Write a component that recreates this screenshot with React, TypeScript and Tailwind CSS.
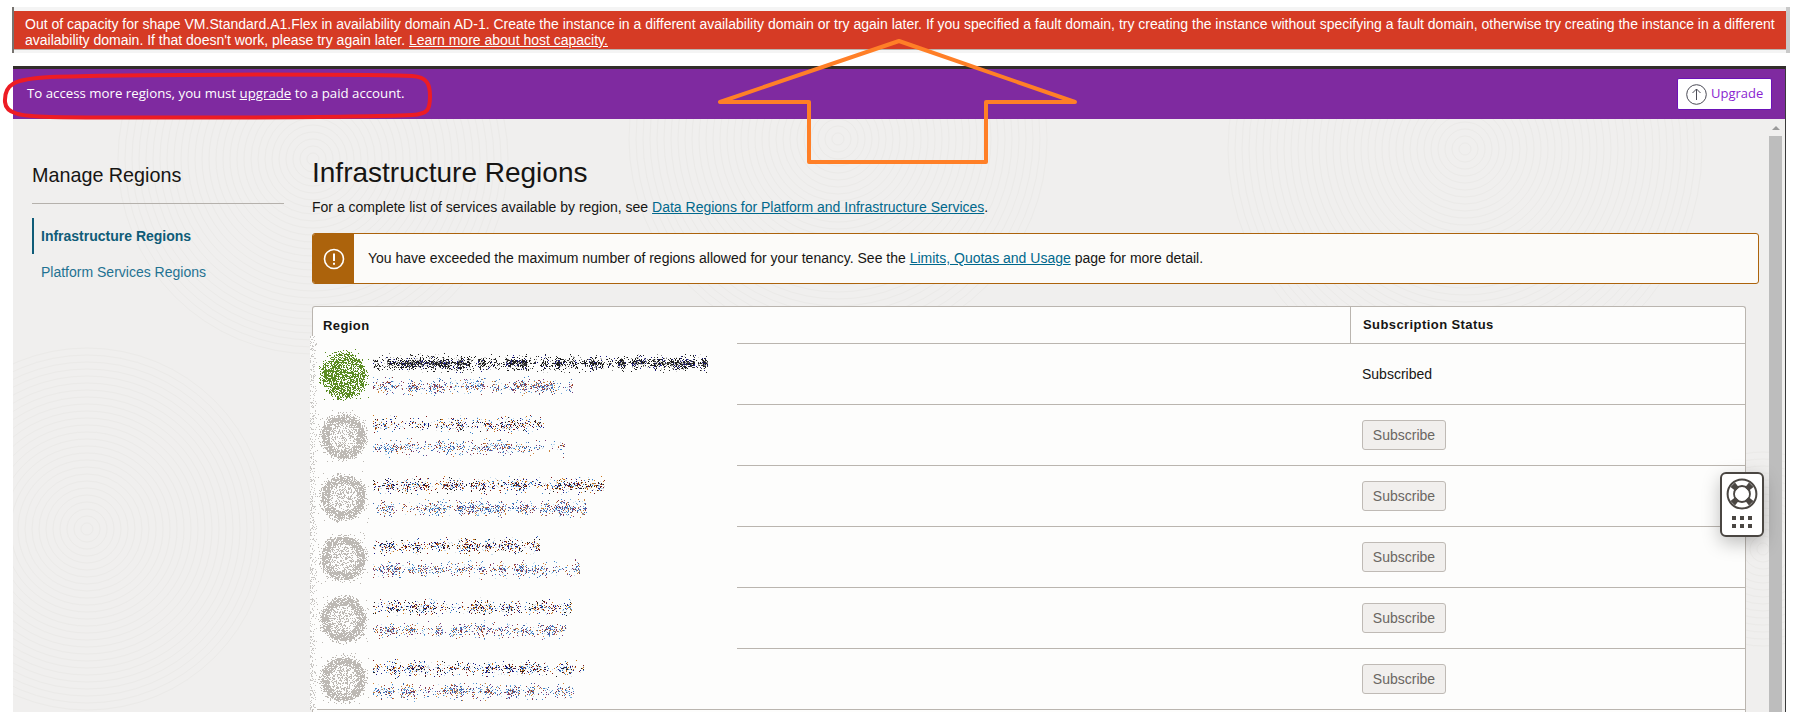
type Dot = { x: number; y: number; c: string };

function rng(seed: number) {
  let s = seed;
  return () => {
    s = (s * 1664525 + 1013904223) % 4294967296;
    return s / 4294967296;
  };
}

function Dots({ dots, width, height, className }: { dots: Dot[]; width: number; height: number; className?: string }) {
  const byColor: Record<string, string> = {};
  dots.forEach((d) => {
    byColor[d.c] = (byColor[d.c] || "") + `M${d.x} ${d.y}h1v1h-1z`;
  });
  return (
    <svg width={width} height={height} className={className} shapeRendering="crispEdges">
      {Object.keys(byColor).map((c) => (
        <path key={c} d={byColor[c]} fill={c} />
      ))}
    </svg>
  );
}

// pixel scatter used for the blurred-out region names
function Scramble({ width, seed, colors, density = 0.5 }: { width: number; seed: number; colors: string[]; density?: number }) {
  const r = rng(seed);
  const dots: Dot[] = [];
  const height = 22;
  let clump = 1;
  for (let x = 0; x < width; x++) {
    if (x % 7 === 0) clump = 0.2 + r() * 1.1;
    for (let y = 0; y < height; y++) {
      const dy = Math.abs(y - height / 2) / (height / 2);
      const p = density * clump * Math.pow(1 - dy, 2);
      if (r() < p) dots.push({ x, y, c: colors[Math.floor(r() * colors.length)] });
    }
  }
  return <Dots dots={dots} width={width} height={height} />;
}

function Globe({ seed, green }: { seed: number; green: boolean }) {
  const r = rng(seed);
  const dots: Dot[] = [];
  const size = 52;
  const c = green ? "#5b8c22" : "#bdb9b4";
  for (let x = 0; x < size; x++) {
    for (let y = 0; y < size; y++) {
      const d = Math.hypot(x - 26, y - 26);
      let p = 0;
      if (d > 25) p = 0.02;
      else if (d > 22) p = 0.22;
      else if (green) p = 0.62;
      else if (d > 14) p = 0.8;
      else p = 0.38;
      if (r() < p) dots.push({ x, y, c });
    }
  }
  return <Dots dots={dots} width={size} height={size} className="shrink-0" />;
}

function EdgeNoise() {
  const r = rng(77);
  const dots: Dot[] = [];
  for (let x = 0; x < 7; x++) {
    for (let y = 0; y < 374; y++) {
      if (r() < 0.35 - x * 0.045) dots.push({ x, y, c: "#c9c7c4" });
    }
  }
  return <Dots dots={dots} width={7} height={374} />;
}

const ink = ["#1b1b1b", "#1b1b1b", "#222222", "#3a3a3a", "#8a8a8a", "#1c1c80", "#cfcfcf"];
const top = ["#1c1c86", "#7d1a1a", "#c9761c", "#3a82c8", "#222222", "#c8dcec", "#e0e0e0"];
const sub = ["#c9823c", "#3a82c8", "#6fa8dc", "#75407f", "#8f3a3a", "#c8e0f0", "#3c64a8"];

const rows = [
  { w1: 335, w2: 200 },
  { w1: 171, w2: 192 },
  { w1: 232, w2: 214 },
  { w1: 167, w2: 207 },
  { w1: 199, w2: 194 },
  { w1: 211, w2: 201 },
];

function Texture() {
  const sets = [
    { x: 1452, y: 30, n: 34 },
    { x: 825, y: 20, n: 30 },
    { x: 74, y: 410, n: 26 },
    { x: 300, y: 40, n: 28 },
    { x: 1750, y: 430, n: 14 },
  ];
  return (
    <svg className="absolute inset-0" width="1773" height="593" fill="none" stroke="#ebeae8" strokeWidth="1">
      {sets.map((s, i) => (
        <g key={i}>
          {Array.from({ length: s.n }).map((_, k) => (
            <circle key={k} cx={s.x} cy={s.y} r={6 + k * 7} />
          ))}
        </g>
      ))}
    </svg>
  );
}

export default function App() {
  return (
    <div className="relative w-[1805px] h-[727px] bg-white overflow-hidden font-['Liberation_Sans',Arial,sans-serif] text-[14px] text-[#161513]">
      {/* error banner */}
      <div className="pt-[7px] pl-[12px]">
        <div className="w-[1778px] h-[46px] border-l-[2px] border-l-[#77736f] border-r-[4px] border-r-[#c9c9c9] bg-[#f4f4f4] pt-[4px]">
          <div className="h-[39px] bg-[#d63b25] border-b border-[#b9b4ae] pl-[11px] pr-[8px] pt-[5px] text-white text-[14px] leading-[16px]">
            Out of capacity for shape VM.Standard.A1.Flex in availability domain AD-1. Create the instance in a different availability domain or try again later. If you specified a fault domain, try creating the instance without specifying a fault domain, otherwise try creating the instance in a different availability domain. If that doesn't work, please try again later.{" "}
            <a className="underline">Learn more about host capacity.</a>
          </div>
        </div>
      </div>

      <div className="mt-[13px] ml-[13px] w-[1773px] border-t-[3px] border-t-[#312d2a] border-r border-r-[#3a3a3a]">
        {/* upgrade bar */}
        <div className="h-[50px] bg-[#7f2aa0] flex items-center justify-between pl-[14px] pr-[13px] text-white font-['Open_Sans',sans-serif] text-[13.25px]">
          <span>
            To access more regions, you must <a className="underline">upgrade</a> to a paid account.
          </span>
          <button className="w-[95px] h-[32px] bg-white border border-[#6c12b8] rounded-[2px] flex items-center gap-[4px] pl-[8px] text-[#8a1fd0] text-[13px]">
            <svg width="21" height="21" viewBox="0 0 21 21" fill="none" stroke="#4a4a55" strokeWidth="1">
              <circle cx="10.5" cy="10.5" r="9.8" />
              <path d="M10.5 16V5M6.5 9l4-4 4 4" />
            </svg>
            Upgrade
          </button>
        </div>

        {/* page body */}
        <div className="relative h-[593px] bg-[#f0efee] overflow-hidden flex">
          <Texture />
          <aside className="relative w-[299px] shrink-0 pl-[19px] pr-[28px]">
            <div className="pt-[44px] h-[85px] border-b border-[#b5b1ac] text-[19.75px] leading-[24px]">Manage Regions</div>
            <nav className="mt-[14px]">
              <div className="h-[36px] border-l-2 border-[#0f5c78] pl-[7px] flex items-center font-bold text-[#0f5c78] text-[14px]">
                Infrastructure Regions
              </div>
              <div className="h-[36px] pl-[9px] flex items-center text-[#1f7292] text-[14px]">Platform Services Regions</div>
            </nav>
          </aside>

          <main className="relative w-[1447px] shrink-0">
            <h1 className="pt-[36px] text-[28px] leading-[36px]">Infrastructure Regions</h1>
            <p className="mt-[6px] leading-[20px]">
              For a complete list of services available by region, see{" "}
              <a className="text-[#00688c] underline">Data Regions for Platform and Infrastructure Services</a>.
            </p>

            <div className="mt-[16px] h-[51px] flex items-stretch rounded-[3px] border border-[#ac630c] bg-[#fcfbf9] overflow-hidden">
              <div className="w-[41px] bg-[#ac630c] flex items-center justify-center">
                <svg width="22" height="22" viewBox="0 0 22 22" fill="none" stroke="#fff" strokeWidth="1.6">
                  <circle cx="11" cy="11" r="9.5" />
                  <path d="M11 5.5v7.5M11 14.8v2" strokeWidth="2" />
                </svg>
              </div>
              <div className="flex items-center pl-[14px]">
                You have exceeded the maximum number of regions allowed for your tenancy. See the&nbsp;
                <a className="text-[#00688c] underline">Limits, Quotas and Usage</a>&nbsp;page for more detail.
              </div>
            </div>

            {/* table */}
            <div className="relative mt-[22px] w-[1434px] bg-[#fdfdfc] border border-b-0 border-[#bab5af] rounded-t-[3px]">
              <div className="flex h-[37px] font-bold text-[13px] tracking-[0.42px]">
                <div className="w-[424px] pl-[10px] flex items-center">Region</div>
                <div className="flex-1 flex border-b border-[#bab5af]">
                  <div className="w-[614px] border-r border-[#bab5af]" />
                  <div className="pl-[12px] flex items-center">Subscription Status</div>
                </div>
              </div>

              {rows.map((row, i) => (
                <div key={i} className={`flex h-[61px] ${i === rows.length - 1 ? "border-b border-[#bab5af]" : ""}`}>
                  <div className="w-[424px] flex items-center gap-[4px] pl-[4px]">
                    <Globe seed={i + 11} green={i === 0} />
                    <div className="flex flex-col gap-[1px]">
                      <Scramble width={row.w1} seed={i * 31 + 5} colors={i === 0 ? ink : top} density={i === 0 ? 1 : 0.6} />
                      <Scramble width={row.w2} seed={i * 47 + 9} colors={sub} density={0.55} />
                    </div>
                  </div>
                  <div className={`flex-1 flex items-center ${i === rows.length - 1 ? "" : "border-b border-[#bab5af]"}`}>
                    <div className="w-[625px]" />
                    {i === 0 ? (
                      <span className="text-[14px]">Subscribed</span>
                    ) : (
                      <button className="w-[84px] h-[30px] bg-[#f1efed] border border-[#bfbab5] rounded-[3px] text-[#6a6662] text-[14px]">
                        Subscribe
                      </button>
                    )}
                  </div>
                </div>
              ))}
              <div className="h-[40px]" />

              <div className="absolute left-[-3px] top-[29px] w-[7px] h-[374px] bg-[#fdfdfc]">
                <EdgeNoise />
              </div>
            </div>
          </main>

          {/* scrollbar */}
          <div className="relative ml-[10px] w-[13px] shrink-0 flex flex-col items-center">
            <div className="h-[17px] flex items-center">
              <div className="w-0 h-0 border-x-[4px] border-x-transparent border-b-[4px] border-b-[#9a9a9a]" />
            </div>
            <div className="flex-1 w-full bg-[#bdbdbd]" />
          </div>
        </div>
      </div>

      {/* help widget */}
      <div className="absolute left-[1720px] top-[472px] w-[44px] h-[65px] bg-white border-2 border-[#4a4642] rounded-[6px] shadow-[0_6px_18px_rgba(0,0,0,0.25)] flex flex-col items-center pt-[4px]">
        <svg width="32" height="32" viewBox="0 0 32 32" fill="none">
          <circle cx="16" cy="16" r="14.4" stroke="#4a4642" strokeWidth="2" />
          <circle cx="16" cy="16" r="8" stroke="#4a4642" strokeWidth="1.8" />
          <path d="M4.5 9 9 4.5 13 9.5 9.5 13zM27.5 9 23 4.5 19 9.5 22.5 13zM4.5 23 9 27.5 13 22.5 9.5 19zM27.5 23 23 27.5 19 22.5 22.5 19z" fill="#4a4642" />
        </svg>
        <div className="mt-[6px] grid grid-cols-3 gap-x-[3.3px] gap-y-[4.5px]">
          {[0, 1, 2, 3, 4, 5].map((n) => (
            <div key={n} className="w-[4.5px] h-[3.5px] bg-[#4a4642]" />
          ))}
        </div>
      </div>

      {/* hand-drawn annotations */}
      <svg className="absolute inset-0 pointer-events-none" width="1805" height="727" fill="none">
        <path d="M899 41 720 102H809V162H986V102H1075Z" stroke="#ff7f27" strokeWidth="4" strokeLinejoin="round" />
        <path d="M50 77 C 120 74 340 74 412 76 C 427 77 430 84 430 96 C 430 110 428 114 412 115 C 340 118 120 118 50 117 C 20 116 6 114 5 102 C 4 84 14 79 50 77Z" stroke="#ed1c24" strokeWidth="4" />
      </svg>
    </div>
  );
}
